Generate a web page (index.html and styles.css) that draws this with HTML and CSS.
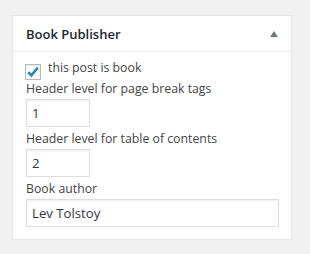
FILE: index.html
```html
<!DOCTYPE html>
<html>
<head>
<meta charset="utf-8">
<link rel="stylesheet" href="styles.css">
</head>
<body>
<div class="postbox">
  <div class="hndle">
    <h2 class="title">Book Publisher</h2>
    <span class="toggle"></span>
  </div>
  <div class="inside">
    <label class="check-row">
      <span class="checkbox">
        <svg width="16" height="16" viewBox="0 0 16 16"><path d="M3.2 8.2 L6.4 11.3 L12.8 3.6" fill="none" stroke="#1e8cbe" stroke-width="2.6" stroke-linecap="butt" stroke-linejoin="miter"/></svg>
      </span>
      <span class="check-label">this post is book</span>
    </label>
    <div class="field-label">Header level for page break tags</div>
    <div class="input short">1</div>
    <div class="field-label">Header level for table of contents</div>
    <div class="input short">2</div>
    <div class="field-label">Book author</div>
    <div class="input wide">Lev Tolstoy</div>
  </div>
</div>
</body>
</html>
```

FILE: styles.css
```css
html, body {
  margin: 0;
  padding: 0;
  background: #f1f1f1;
}
body {
  padding: 15px 18px 0 12px;
  font-family: "Open Sans", "Noto Sans", sans-serif;
  font-size: 12.3px;
  color: #444;
}
.postbox {
  width: 278px;
  height: 223px;
  background: #fff;
  border: 1px solid #e5e5e5;
  box-shadow: 0 1px 1px rgba(0,0,0,0.04);
}
.hndle {
  height: 35px;
  border-bottom: 1px solid #eee;
  display: flex;
  align-items: center;
  justify-content: space-between;
  padding: 0 13px 0 13px;
}
.title {
  margin: 0;
  font-size: 13px;
  font-weight: 600;
  color: #23282d;
}
.toggle {
  width: 0;
  height: 0;
  border-left: 4px solid transparent;
  border-right: 4px solid transparent;
  border-bottom: 6px solid #72777c;
  margin-right: 0;
}
.inside {
  padding: 6px 12px 12px;
  display: flex;
  flex-direction: column;
  align-items: flex-start;
}
.check-row {
  display: flex;
  align-items: flex-start;
  height: 20px;
  line-height: 20px;
  gap: 7px;
  color: #444;
}
.checkbox {
  margin-top: 6px;
  width: 14px;
  height: 14px;
  border: 1px solid #b4b9be;
  box-shadow: inset 0 1px 2px rgba(0,0,0,0.1);
  display: flex;
  align-items: center;
  justify-content: center;
}
.checkbox svg {
  flex: none;
}
.field-label {
  padding-top: 2px;
  line-height: 18px;
  padding-left: 1px;
}
.input {
  box-sizing: border-box;
  height: 28px;
  margin: 1px;
  border: 1px solid #ddd;
  box-shadow: inset 0 1px 2px rgba(0,0,0,0.07);
  padding: 0 5px;
  line-height: 26px;
  color: #32373c;
  font-size: 13.2px;
}
.short { width: 64px; }
.wide { width: 253px; }
```
